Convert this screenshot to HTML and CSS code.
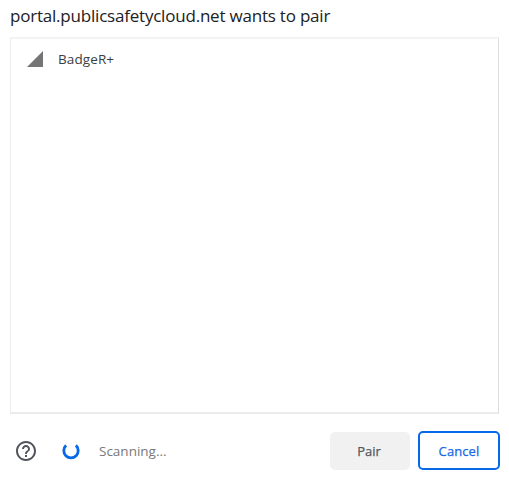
FILE: index.html
```html
<!DOCTYPE html>
<html lang="en">
<head>
<meta charset="utf-8">
<title>Pair device</title>
<link rel="stylesheet" href="styles.css">
</head>
<body>
<main class="dialog">
  <h1 class="title"><span>portal.publicsafetycloud.net wants to pair</span></h1>
  <ul class="devices">
    <li class="device">
      <svg class="signal" viewBox="0 0 16 16"><path d="M0 16H16V0Z"/></svg>
      <span>BadgeR+</span>
    </li>
  </ul>
  <footer class="footer">
    <svg class="help" viewBox="2 2 20 20"><path d="M11 18h2v-2h-2v2zm1-16C6.48 2 2 6.48 2 12s4.48 10 10 10 10-4.48 10-10S17.52 2 12 2zm0 18c-4.41 0-8-3.59-8-8s3.59-8 8-8 8 3.59 8 8-3.59 8-8 8zm0-14c-2.21 0-4 1.79-4 4h2c0-1.1.9-2 2-2s2 .9 2 2c0 2-3 1.75-3 5h2c0-2.25 3-2.5 3-5 0-2.21-1.79-4-4-4z"/></svg>
    <svg class="spinner" viewBox="0 0 18 18"><path d="M4.1 3.4A7.2 7.2 0 1 0 13.9 3.4"/></svg>
    <span class="status">Scanning...</span>
    <button class="button pair" type="button"><span>Pair</span></button>
    <button class="button cancel" type="button"><span>Cancel</span></button>
  </footer>
</main>
</body>
</html>
```
FILE: styles.css
```css
* { box-sizing: border-box; }
body {
  margin: 0;
  background: #fff;
  color: #202124;
  font-family: "Open Sans", "Noto Sans", sans-serif;
}
.dialog {
  height: 487px;
  padding: 0 9px 0 10px;
  display: flex;
  flex-direction: column;
}
.title {
  margin: 0;
  height: 37px;
  padding-top: 4px;
  font-size: 17px;
  line-height: 24px;
  font-weight: 400;
  letter-spacing: -0.21px;
  white-space: nowrap;
}
.devices {
  margin: 0;
  padding: 13px 16px;
  list-style: none;
  width: 489px;
  height: 377px;
  border: 1px solid #ddd;
  border-top: 2px solid #f3f3f3;
  border-left-color: #ededed;
  border-bottom: 2px solid #ebebeb;
}
.device {
  display: flex;
  align-items: center;
  height: 14px;
  gap: 15px;
  font-size: 13.5px;
  letter-spacing: 0.1px;
  color: #3c4043;
}
.signal { width: 16px; height: 16px; fill: #757575; }
.footer {
  display: flex;
  align-items: center;
  height: 39px;
  margin-top: 17px;
  padding-left: 6px;
}
.help { width: 20px; height: 20px; fill: #51545b; }
.spinner {
  width: 18px;
  height: 18px;
  margin-left: 26px;
  fill: none;
  stroke: #0869e8;
  stroke-width: 2.8;
}
.status {
  margin-left: 19px;
  font-size: 13.5px;
  color: #77797c;
}
.button {
  padding: 0;
  border: 0;
  border-radius: 5px;
  font: 500 13px "Open Sans", "Noto Sans", sans-serif;
  -webkit-text-stroke: 0.25px currentColor;
}
.pair {
  width: 80px;
  height: 38px;
  margin-left: auto;
  padding-right: 2px;
  background: #f1f1f1;
  color: #55585c;
}
.cancel {
  width: 82px;
  height: 39px;
  margin-left: 8px;
  border: 2px solid #0869e8;
  background: #fff;
  color: #1668e3;
  letter-spacing: 0.1px;
}
```
